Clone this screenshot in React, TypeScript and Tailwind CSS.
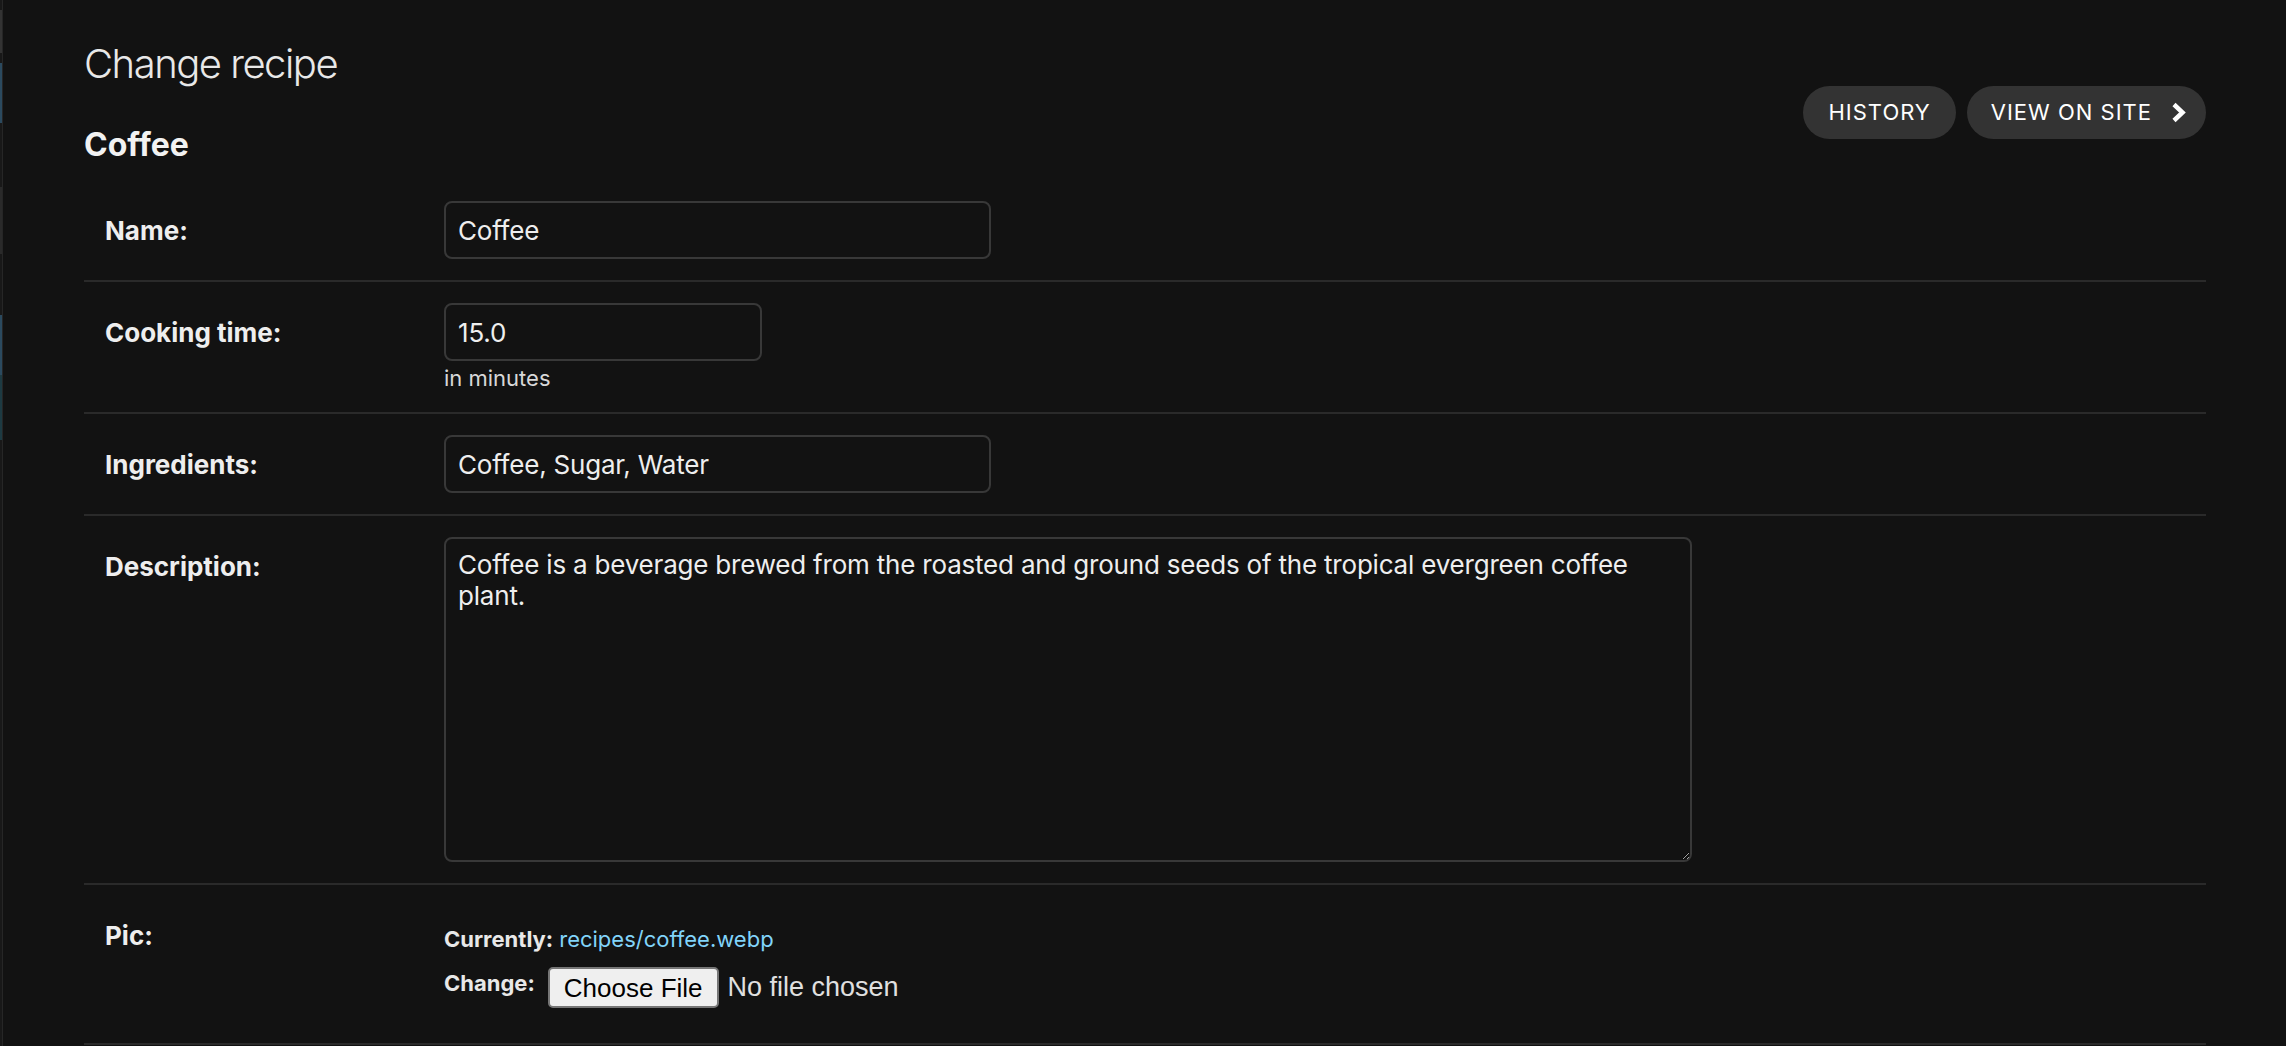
import React from "react";

const font = { fontFamily: "Inter, 'Noto Sans', sans-serif" };
const sys = { fontFamily: "'Liberation Sans', Arial, sans-serif" };

const Strip = () => (
  <div className="flex w-[3px] shrink-0 flex-col border-r border-[#262626] bg-[#181818]">
    <div className="h-[10px]" />
    <div className="h-[43px] bg-[#333333]" />
    <div className="h-[10px]" />
    <div className="h-[60px] bg-[#2b4a5f]" />
    <div className="h-[64px]" />
    <div className="h-[67px] bg-[#2a2a2a]" />
    <div className="h-[61px]" />
    <div className="h-[60px] bg-[#2b4a5f]" />
    <div className="h-[65px] bg-[#1d3a42]" />
    <div className="flex-1" />
  </div>
);

const Label = ({ children }: { children: React.ReactNode }) => (
  <div className="flex h-[58px] w-[339px] shrink-0 items-center text-[26px] font-bold text-[#eeeeee]">
    {children}
  </div>
);

const Row = ({ children }: { children: React.ReactNode }) => (
  <div className="flex border-b-2 border-[#2a2a2a] py-[21px] pl-[21px]">{children}</div>
);

const TextInput = ({ value, width }: { value: string; width: string }) => (
  <input
    readOnly
    value={value}
    className={`${width} h-[58px] rounded-[8px] border-2 border-[#383838] bg-[#121212] px-[12px] text-[26px] tracking-[-0.2px] text-[#eeeeee] outline-none`}
  />
);

export default function App() {
  return (
    <div className="flex min-h-screen bg-[#121212] text-[#eeeeee]" style={font}>
      <Strip />
      <main className="flex-1 pl-[81px] pr-[80px]">
        <div className="flex items-start justify-between">
          <div>
            <h1 className="mt-[40px] text-[40px] font-light leading-[48px] tracking-[-1.5px] text-[#e8e8e8]">
              Change recipe
            </h1>
            <h2 className="mt-[37px] text-[32px] font-bold leading-[40px] text-[#f2f2f2]">Coffee</h2>
          </div>
          <div className="mt-[86px] flex gap-[11px]">
            <button className="flex h-[53px] items-center rounded-full bg-[#333333] px-[25px] text-[22px] tracking-[1px] text-white">
              HISTORY
            </button>
            <button className="flex h-[53px] items-center rounded-full bg-[#333333] pl-[24px] pr-[20px] text-[22px] tracking-[1px] text-white">
              VIEW ON SITE
              <svg className="ml-[19px]" width="15" height="23" viewBox="0 0 15 23">
                <path d="M3 3.5 L11.5 11.5 L3 19.5" fill="none" stroke="white" strokeWidth="4.5" strokeLinejoin="miter" />
              </svg>
            </button>
          </div>
        </div>

        <div className="mt-[15px]">
          <Row>
            <Label>Name:</Label>
            <TextInput value="Coffee" width="w-[547px]" />
          </Row>
          <Row>
            <Label>Cooking time:</Label>
            <div className="flex flex-col">
              <TextInput value="15.0" width="w-[318px]" />
              <div className="mt-[4px] text-[22px] leading-[26px] text-[#d8d8d8]">in minutes</div>
            </div>
          </Row>
          <Row>
            <Label>Ingredients:</Label>
            <TextInput value="Coffee, Sugar, Water" width="w-[547px]" />
          </Row>
          <Row>
            <Label>Description:</Label>
            <textarea
              readOnly
              value="Coffee is a beverage brewed from the roasted and ground seeds of the tropical evergreen coffee plant."
              className="h-[325px] w-[1248px] rounded-[8px] border-2 border-[#383838] bg-[#121212] px-[12px] pt-[10px] text-[26px] leading-[31px] tracking-[-0.2px] text-[#eeeeee] outline-none"
            />
          </Row>
          <Row>
            <Label>Pic:</Label>
            <div className="flex flex-col py-[14px] text-[22px]">
              <div className="flex h-[38px] items-center gap-[6px]">
                <span className="font-bold text-[#e8e8e8]">Currently:</span>
                <a className="text-[#81d4fa]">recipes/coffee.webp</a>
              </div>
              <div className="mt-[9px] flex h-[41px] items-center">
                <span className="mb-[8px] mr-[13px] font-bold text-[#e8e8e8]">Change:</span>
                <button
                  className="h-[41px] rounded-[5px] border-2 border-[#767676] bg-[#efefef] px-[14px] text-[26px] text-black"
                  style={sys}
                >
                  Choose File
                </button>
                <span className="ml-[9px] text-[27px] text-[#e0e0e0]" style={sys}>
                  No file chosen
                </span>
              </div>
            </div>
          </Row>
        </div>
      </main>
    </div>
  );
}
